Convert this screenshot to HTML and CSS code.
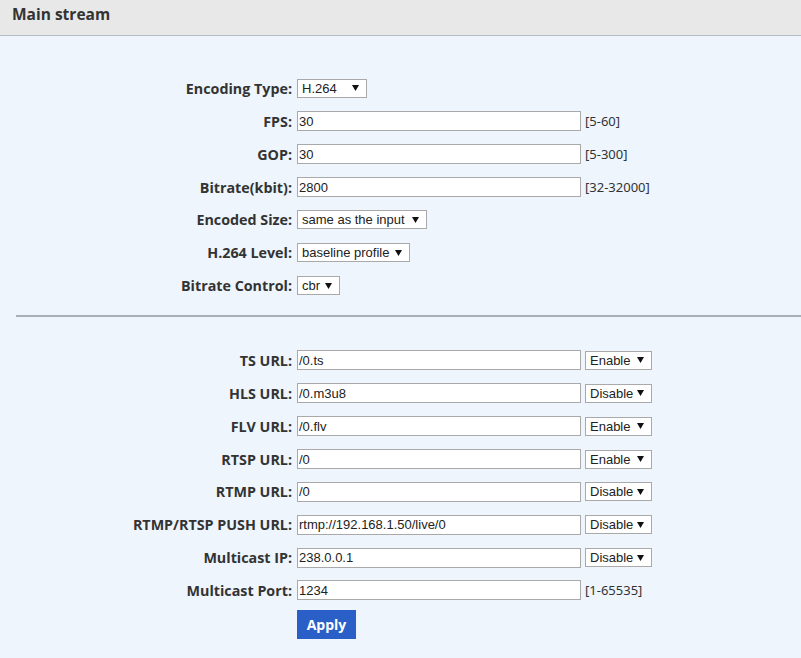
FILE: index.html
```html
<!DOCTYPE html>
<html>
<head>
<meta charset="utf-8">
<link rel="stylesheet" href="styles.css">
</head>
<body>
<div class="header">Main stream</div>
<div class="content">
  <div class="form section-top">
    <label class="lbl">Encoding Type:</label>
    <div class="ctl"><select class="sel w-enc"><option>H.264</option></select></div>

    <label class="lbl">FPS:</label>
    <div class="ctl"><input class="txt" value="30"><span class="hint">[5-60]</span></div>

    <label class="lbl">GOP:</label>
    <div class="ctl"><input class="txt" value="30"><span class="hint">[5-300]</span></div>

    <label class="lbl">Bitrate(kbit):</label>
    <div class="ctl"><input class="txt" value="2800"><span class="hint">[32-32000]</span></div>

    <label class="lbl">Encoded Size:</label>
    <div class="ctl"><select class="sel w-size"><option>same as the input</option></select></div>

    <label class="lbl">H.264 Level:</label>
    <div class="ctl"><select class="sel w-level"><option>baseline profile</option></select></div>

    <label class="lbl">Bitrate Control:</label>
    <div class="ctl"><select class="sel w-cbr"><option>cbr</option></select></div>
  </div>

  <hr class="divider">

  <div class="form section-bottom">
    <label class="lbl">TS URL:</label>
    <div class="ctl"><input class="txt" value="/0.ts"><select class="sel w-en"><option>Enable</option></select></div>

    <label class="lbl">HLS URL:</label>
    <div class="ctl"><input class="txt" value="/0.m3u8"><select class="sel w-en"><option>Disable</option></select></div>

    <label class="lbl">FLV URL:</label>
    <div class="ctl"><input class="txt" value="/0.flv"><select class="sel w-en"><option>Enable</option></select></div>

    <label class="lbl">RTSP URL:</label>
    <div class="ctl"><input class="txt" value="/0"><select class="sel w-en"><option>Enable</option></select></div>

    <label class="lbl">RTMP URL:</label>
    <div class="ctl"><input class="txt" value="/0"><select class="sel w-en"><option>Disable</option></select></div>

    <label class="lbl">RTMP/RTSP PUSH URL:</label>
    <div class="ctl"><input class="txt" value="rtmp://192.168.1.50/live/0"><select class="sel w-en"><option>Disable</option></select></div>

    <label class="lbl">Multicast IP:</label>
    <div class="ctl"><input class="txt" value="238.0.0.1"><select class="sel w-en"><option>Disable</option></select></div>

    <label class="lbl">Multicast Port:</label>
    <div class="ctl"><input class="txt" value="1234"><span class="hint">[1-65535]</span></div>

    <span></span>
    <div class="ctl btn-row"><button class="apply">Apply</button></div>
  </div>
</div>
</body>
</html>
```

FILE: styles.css
```css
html, body {
  margin: 0;
  padding: 0;
}

body {
  background: #eef5fd;
  color: #333;
  font-family: "Open Sans", "Liberation Sans", sans-serif;
  width: 801px;
  height: 658px;
  overflow: hidden;
}

.header {
  background: #e8e8e8;
  border-bottom: 1px solid #b4bac4;
  box-sizing: border-box;
  height: 36px;
  padding: 4px 0 0 12px;
  font-weight: bold;
  font-size: 15.5px;
  line-height: 20px;
  color: #333;
}

.content {
  padding-top: 36px;
}

.form {
  display: grid;
  grid-template-columns: 292px 1fr;
  column-gap: 5px;
  grid-auto-rows: 32.86px;
  align-items: center;
}

.lbl {
  text-align: right;
  font-weight: bold;
  font-size: 14.3px;
  color: #333;
  white-space: nowrap;
}

.ctl {
  display: flex;
  align-items: center;
  gap: 4px;
}

.txt {
  box-sizing: border-box;
  width: 284px;
  height: 20px;
  margin: 0;
  padding: 0 1px;
  border: 1px solid #a9a9a9;
  background: #fff;
  font-family: "Liberation Sans", Arial, sans-serif;
  font-size: 13px;
  color: #222;
  outline: none;
}

.sel {
  box-sizing: border-box;
  height: 19px;
  margin: 0;
  padding: 0 0 0 4px;
  border: 1px solid #a9a9a9;
  border-radius: 0;
  background-color: #fff;
  background-image: url("data:image/svg+xml,%3Csvg xmlns='http://www.w3.org/2000/svg' width='7' height='6'%3E%3Cpath d='M0 0H7L3.5 6Z' fill='%23111'/%3E%3C/svg%3E");
  background-repeat: no-repeat;
  background-position: right 7px center;
  -webkit-appearance: none;
  appearance: none;
  font-family: "Liberation Sans", Arial, sans-serif;
  font-size: 13px;
  color: #222;
  line-height: 17px;
}

.w-enc { width: 70px; }
.w-size { width: 130px; }
.w-level { width: 113px; }
.w-cbr { width: 43px; }
.w-en { width: 67px; }

.hint {
  font-family: "Noto Sans", "Open Sans", sans-serif;
  font-size: 13px;
  color: #333;
}

.divider {
  margin: 13px 0 27px 16px;
  border: 0;
  border-top: 2px solid #a9afb6;
  height: 0;
}

.btn-row {
  align-self: start;
  padding-top: 3px;
}

.apply {
  width: 59px;
  height: 29px;
  margin: 0;
  padding: 0;
  border: 0;
  background: #2a5fc7;
  color: #fff;
  font-family: "Open Sans", "Liberation Sans", sans-serif;
  font-weight: bold;
  font-size: 14px;
}
```
